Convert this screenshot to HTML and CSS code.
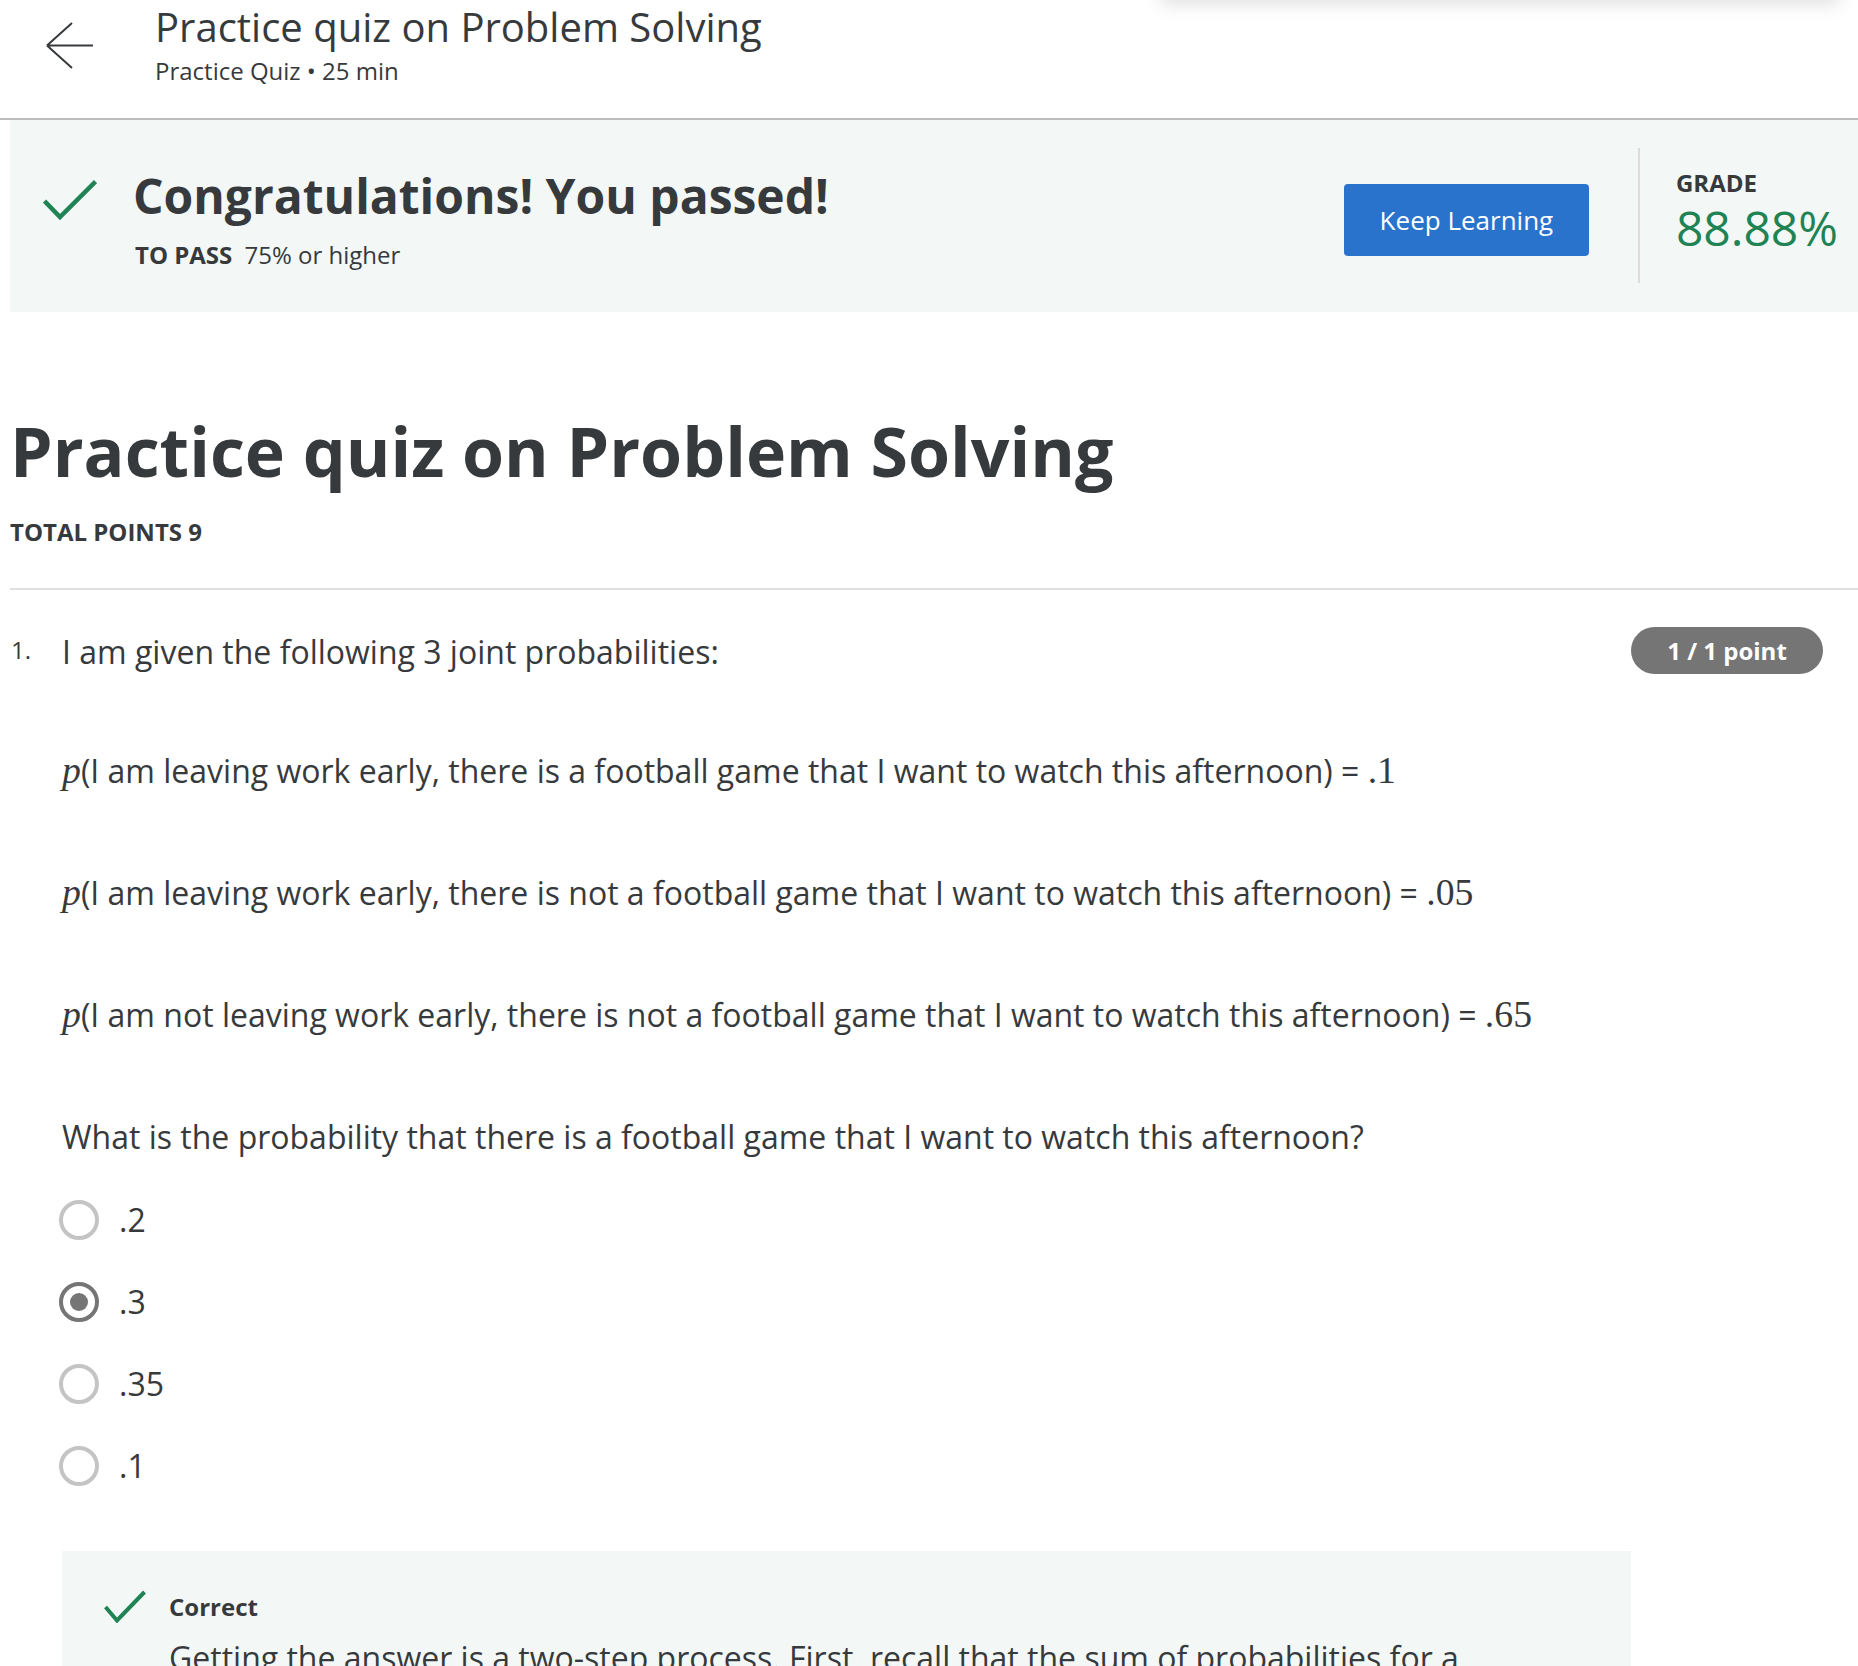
FILE: index.html
```html
<!DOCTYPE html>
<html lang="en">
<head>
<meta charset="utf-8">
<title>Practice quiz on Problem Solving</title>
<link rel="stylesheet" href="styles.css">
</head>
<body>
<div class="page">
  <div class="overlay-shadow"></div>
  <header class="topbar">
    <svg class="back" width="48" height="48" viewBox="0 0 48 48" aria-hidden="true">
      <path d="M1 23.5 H47 M1 23.5 L26 1 M1 23.5 L26 46" fill="none" stroke="#373a3c" stroke-width="2"/>
    </svg>
    <div class="topbar-text">
      <div class="topbar-title">Practice quiz on Problem Solving</div>
      <div class="topbar-sub">Practice Quiz • 25 min</div>
    </div>
  </header>

  <main class="main">
    <section class="banner">
      <div class="banner-left">
        <svg class="check-big" width="54" height="41" viewBox="0 0 54 41" aria-hidden="true">
          <path d="M1.5 22 L17 38 L52.5 2.5" fill="none" stroke="#1f8354" stroke-width="4.5"/>
        </svg>
        <div>
          <h2 class="banner-title">Congratulations! You passed!</h2>
          <div class="banner-sub"><span class="to-pass">TO PASS</span> 75% or higher</div>
        </div>
      </div>
      <button class="keep-btn">Keep Learning</button>
      <div class="vdivider"></div>
      <div class="grade">
        <div class="grade-label">GRADE</div>
        <div class="grade-value">88.88%</div>
      </div>
    </section>

    <h1 class="quiz-title">Practice quiz on Problem Solving</h1>
    <div class="total-points">TOTAL POINTS 9</div>
    <hr class="hdivider">

    <section class="question">
      <div class="q-num">1.</div>
      <div class="q-body">
        <p class="q-text">I am given the following 3 joint probabilities:</p>
        <p class="q-line"><span class="math-i">p</span>(I am leaving work early, there is a football game that I want to watch this afternoon) = <span class="math">.1</span></p>
        <p class="q-line"><span class="math-i">p</span>(I am leaving work early, there is not a football game that I want to watch this afternoon) = <span class="math">.05</span></p>
        <p class="q-line"><span class="math-i">p</span>(I am not leaving work early, there is not a football game that I want to watch this afternoon) = <span class="math">.65</span></p>
        <p class="q-line">What is the probability that there is a football game that I want to watch this afternoon?</p>

        <div class="options">
          <div class="option"><span class="radio"></span><span class="opt-label">.2</span></div>
          <div class="option"><span class="radio selected"></span><span class="opt-label">.3</span></div>
          <div class="option"><span class="radio"></span><span class="opt-label">.35</span></div>
          <div class="option"><span class="radio"></span><span class="opt-label">.1</span></div>
        </div>

        <div class="feedback">
          <div class="feedback-head">
            <svg width="42" height="33" viewBox="0 0 42 33" aria-hidden="true">
              <path d="M1.5 17 L13 30.5 L40.5 2" fill="none" stroke="#1f8354" stroke-width="4"/>
            </svg>
            <span class="feedback-title">Correct</span>
          </div>
          <p class="feedback-text">Getting the answer is a two-step process. First, recall that the sum of probabilities for a</p>
        </div>
      </div>
      <div class="q-side"><span class="badge">1 / 1 point</span></div>
    </section>
  </main>
</div>
</body>
</html>
```

FILE: styles.css
```css
html, body {
  margin: 0;
  padding: 0;
  background: #ffffff;
}

body {
  font-family: "Open Sans", "Noto Sans", sans-serif;
  color: #373a3c;
}

.page {
  position: relative;
  height: 1666px;
  overflow: hidden;
}

.overlay-shadow {
  position: absolute;
  top: -60px;
  left: 1160px;
  width: 680px;
  height: 60px;
  background: #ffffff;
  box-shadow: 0 4px 18px rgba(0, 0, 0, 0.13);
  border-radius: 0 0 6px 6px;
}

/* Top bar */
.topbar {
  display: flex;
  align-items: flex-start;
  height: 118px;
  border-bottom: 2px solid #bdbdbd;
  padding-left: 46px;
}

.back {
  margin-top: 22px;
  flex: none;
}

.topbar-text {
  margin-left: 61px;
  padding-top: 2px;
}

.topbar-title {
  font-size: 40px;
  line-height: 50px;
  font-weight: 400;
}

.topbar-sub {
  font-size: 24px;
  line-height: 30px;
  margin-top: 4px;
}

/* Main */
.main {
  margin-left: 10px;
}

.banner {
  display: flex;
  align-items: flex-start;
  height: 192px;
  background: #f3f8f7;
}

.banner-left {
  flex: 1;
  display: flex;
  align-items: flex-start;
  padding-left: 33px;
  padding-top: 48px;
}

.check-big {
  margin-top: 11px;
  margin-right: 36px;
  flex: none;
}

.banner-title {
  margin: 0;
  font-size: 48px;
  line-height: 56px;
  font-weight: 700;
}

.banner-sub {
  margin-top: 16px;
  font-size: 24px;
  line-height: 30px;
  padding-left: 2px;
}

.to-pass {
  font-weight: 700;
  font-size: 24px;
  margin-right: 6px;
}

.keep-btn {
  margin-top: 64px;
  width: 245px;
  height: 72px;
  border: none;
  border-radius: 4px;
  background: #2a73cc;
  color: #ffffff;
  font-family: "Open Sans", sans-serif;
  font-size: 26px;
  font-weight: 400;
  padding: 0;
  flex: none;
}

.vdivider {
  margin-top: 28px;
  margin-left: 49px;
  width: 2px;
  height: 135px;
  background: #dcdcdc;
  flex: none;
}

.grade {
  margin-left: 36px;
  padding-top: 50px;
  padding-right: 20px;
  flex: none;
}

.grade-label {
  font-size: 24px;
  line-height: 26px;
  font-weight: 700;
}

.grade-value {
  margin-top: 1px;
  font-size: 48px;
  line-height: 62px;
  color: #1f8354;
}

.quiz-title {
  margin: 99px 0 0 0;
  font-size: 68px;
  line-height: 80px;
  font-weight: 700;
}

.total-points {
  margin-top: 26px;
  font-size: 24px;
  line-height: 30px;
  font-weight: 700;
}

.hdivider {
  margin: 41px 0 0 0;
  border: none;
  height: 2px;
  background: #e0e0e0;
}

/* Question */
.question {
  display: flex;
  align-items: flex-start;
  padding-top: 37px;
  padding-right: 35px;
}

.q-num {
  width: 52px;
  flex: none;
  font-size: 24px;
  line-height: 42px;
  padding-top: 2px;
  padding-left: 1px;
  box-sizing: border-box;
}

.q-body {
  flex: 1;
  padding-top: 4px;
}

.q-side {
  width: 192px;
  flex: none;
}

.badge {
  display: block;
  height: 47px;
  line-height: 47px;
  border-radius: 24px;
  background: #757575;
  color: #ffffff;
  font-size: 24px;
  font-weight: 700;
  text-align: center;
}

.q-text,
.q-line {
  margin: 0;
  font-size: 32px;
  line-height: 42px;
}

.q-line {
  margin-top: 77px;
}

.q-line + .q-line {
  margin-top: 80px;
}

.math-i {
  font-family: "Liberation Serif", "DejaVu Serif", serif;
  font-style: italic;
  font-size: 1.18em;
  line-height: 0;
}

.math {
  font-family: "Liberation Serif", "DejaVu Serif", serif;
  font-size: 1.18em;
  line-height: 0;
}

.options {
  margin-top: 42px;
  display: flex;
  flex-direction: column;
  gap: 42px;
}

.option {
  display: flex;
  align-items: center;
  height: 40px;
  margin-left: -3px;
}

.radio {
  width: 40px;
  height: 40px;
  box-sizing: border-box;
  border: 4px solid #c4c4c4;
  border-radius: 50%;
  display: flex;
  align-items: center;
  justify-content: center;
  flex: none;
}

.radio.selected {
  border-color: #757575;
}

.radio.selected::after {
  content: "";
  width: 18px;
  height: 18px;
  border-radius: 50%;
  background: #757575;
}

.opt-label {
  margin-left: 20px;
  font-size: 32px;
  line-height: 40px;
}

.feedback {
  margin-top: 65px;
  background: #f3f8f7;
  padding: 39px 40px 40px 42px;
}

.feedback-head {
  display: flex;
  align-items: center;
  height: 33px;
}

.feedback-head svg {
  flex: none;
}

.feedback-title {
  margin-left: 23px;
  font-size: 24px;
  line-height: 33px;
  font-weight: 700;
}

.feedback-text {
  margin: 14px 0 0 65px;
  font-size: 32px;
  line-height: 42px;
}
```
